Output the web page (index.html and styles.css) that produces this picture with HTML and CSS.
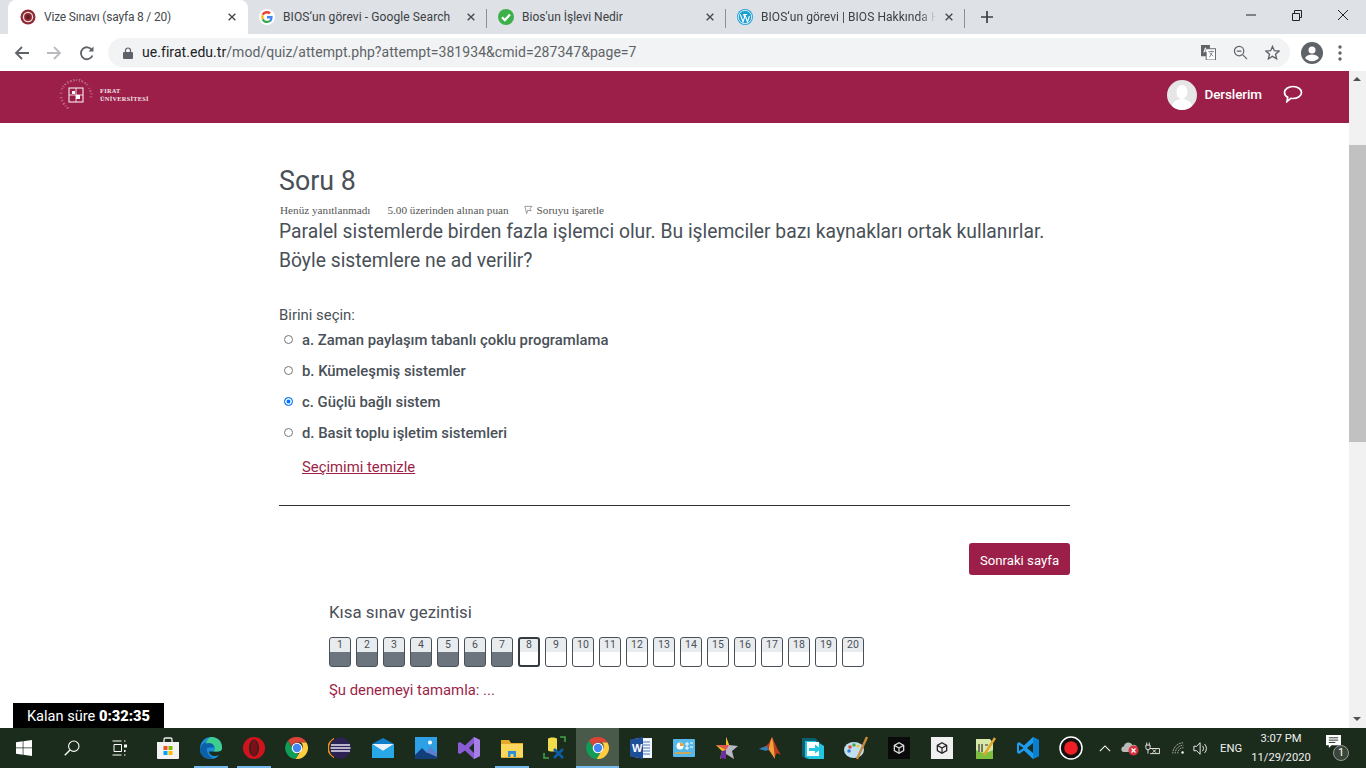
FILE: index.html
```html
<!DOCTYPE html>
<html lang="tr">
<head>
<meta charset="utf-8">
<title>Vize Sınavı (sayfa 8 / 20)</title>
<link rel="stylesheet" href="styles.css">
</head>
<body>
<svg class="defs" width="0" height="0" aria-hidden="true">
  <symbol id="chrome" viewBox="0 0 24 24">
    <path d="M12 1a11 11 0 0 1 9.500 5.500H12a5.500 5.500 0 0 0-5.300 4L3 4.600A11 11 0 0 1 12 1z" fill="#db4437"/>
    <path d="M3 4.600l4.700 8.200a5.500 5.500 0 0 0 6.200 4.800L10.700 22.900A11 11 0 0 1 3 4.600z" fill="#0f9d58"/>
    <path d="M21.500 6.500A11 11 0 0 1 10.700 22.900l4.900-7.900A5.500 5.500 0 0 0 16 6.500z" fill="#ffcd40"/>
    <circle cx="12" cy="12" r="5.300" fill="#fff"/><circle cx="12" cy="12" r="4.200" fill="#4285f4"/>
  </symbol>
  <symbol id="unity" viewBox="0 0 24 24">
    <path d="M12 3l8 4.500v9L12 21l-8-4.500v-9z" fill="none" stroke="currentColor" stroke-width="2.200"/>
    <path d="M12 12L4 7.500M12 12l8-4.500M12 12v9" stroke="currentColor" stroke-width="2"/>
  </symbol>
  <symbol id="x" viewBox="0 0 12 12"><path d="M2 2l8 8M10 2l-8 8" stroke="currentColor" stroke-width="1.600" fill="none"/></symbol>
</svg>

<div class="tabstrip">
  <div class="tab active">
    <svg class="fav" viewBox="0 0 16 16"><circle cx="8" cy="8" r="7.500" fill="#8f2a35"/><circle cx="8" cy="8" r="4.600" fill="none" stroke="#f1dcdc" stroke-width="1.300"/><circle cx="8" cy="8" r="2" fill="#5e1820"/></svg>
    <span class="tab-title tight">Vize Sınavı (sayfa 8 / 20)</span>
    <svg class="tab-x"><use href="#x"/></svg>
  </div>
  <div class="tab second">
    <svg class="fav" viewBox="0 0 16 16"><circle cx="8" cy="8" r="8" fill="#fff"/><path d="M13.600 8.200c0-.5 0-.9-.1-1.300H8v2.500h3.200c-.1.800-.6 1.400-1.200 1.800l1.900 1.500c1.100-1 1.700-2.600 1.700-4.500z" fill="#4285f4"/><path d="M8 14c1.600 0 2.900-.5 3.900-1.400L10 11.200c-.5.400-1.200.6-2 .6-1.500 0-2.800-1-3.300-2.400L2.800 10.900C3.800 12.800 5.700 14 8 14z" fill="#34a853"/><path d="M4.700 9.400a3.700 3.700 0 0 1 0-2.400L2.800 5.500a6 6 0 0 0 0 5.400z" fill="#fbbc05"/><path d="M8 4.400c.9 0 1.600.3 2.200.9l1.700-1.700C10.900 2.600 9.600 2 8 2 5.700 2 3.800 3.200 2.800 5.100L4.700 6.600C5.200 5.300 6.500 4.400 8 4.400z" fill="#ea4335"/></svg>
    <span class="tab-title wide">BIOS‘un görevi - Google Search</span>
    <svg class="tab-x"><use href="#x"/></svg>
  </div>
  <div class="tab">
    <svg class="fav" viewBox="0 0 16 16"><circle cx="8" cy="8" r="8" fill="#3eb049"/><path d="M4 8.300l2.800 2.800L12 5.600" fill="none" stroke="#fff" stroke-width="2.200"/></svg>
    <span class="tab-title">Bios'un İşlevi Nedir</span>
    <svg class="tab-x"><use href="#x"/></svg>
  </div>
  <div class="tab">
    <svg class="fav" viewBox="0 0 16 16"><circle cx="8" cy="8" r="8" fill="#1ea0d5"/><circle cx="8" cy="8" r="6.700" fill="none" stroke="#fff" stroke-width=".8"/><path d="M3.300 5.500L6 12.800l1.600-4.700-1-2.600M6.300 5.500h3.800M7.800 5.500l2.600 7.300 2.100-5.800" fill="none" stroke="#fff" stroke-width="1.100"/></svg>
    <span class="tab-title fade">BIOS‘un görevi | BIOS Hakkında H</span>
    <svg class="tab-x"><use href="#x"/></svg>
  </div>
  <svg class="newtab" viewBox="0 0 12 12"><path d="M6 0v12M0 6h12" stroke="#3c4043" stroke-width="1.700" fill="none"/></svg>
  <div class="winctl">
    <svg class="wc" viewBox="0 0 46 30"><path d="M18 15h10" stroke="#222" stroke-width="1"/></svg>
    <svg class="wc" viewBox="0 0 46 30"><path d="M18.500 13.500h7v7h-7zM20.500 13v-2.500h7v7H26" fill="none" stroke="#222" stroke-width="1"/></svg>
    <svg class="wc" viewBox="0 0 46 30"><path d="M18 10l10 10M28 10L18 20" stroke="#222" stroke-width="1"/></svg>
  </div>
</div>

<div class="toolbar">
  <svg class="navbtn" viewBox="0 0 16 16"><path d="M15 8H2.500M8 2L2 8l6 6" fill="none" stroke="#5f6368" stroke-width="1.800"/></svg>
  <svg class="navbtn" viewBox="0 0 16 16"><path d="M1 8h12.500M8 2l6 6-6 6" fill="none" stroke="#b9bbbe" stroke-width="1.800"/></svg>
  <svg class="navbtn" viewBox="0 0 16 16"><path d="M13.500 10.500A6 6 0 1 1 13 5" fill="none" stroke="#5f6368" stroke-width="1.800"/><path d="M14.500 1.500v5h-5z" fill="#5f6368"/></svg>
  <div class="omnibox">
    <svg class="lock" viewBox="0 0 10 12"><path d="M2.500 5V3.500a2.500 2.500 0 0 1 5 0V5" fill="none" stroke="#5f6368" stroke-width="1.200"/><rect y="5" width="10" height="7" rx="1" fill="#5f6368"/></svg>
    <div class="url"><span class="host">ue.firat.edu.tr</span>/mod/quiz/attempt.php?attempt=381934&amp;cmid=287347&amp;page=7</div>
    <svg class="omni-i" viewBox="0 0 16 16"><rect width="9.500" height="12" fill="#5f6368"/><rect x="5.500" y="4" width="10" height="12" fill="#fff" stroke="#5f6368"/><path d="M8 7h6M11 6v1M9 13l3-5M9 8l4 4" stroke="#5f6368" stroke-width=".8"/><path d="M3 8l1.700-5L6.500 8M3.500 6.500h2.500" fill="none" stroke="#fff"/></svg>
    <svg class="omni-i" viewBox="0 0 16 16"><circle cx="6.500" cy="6.500" r="5" fill="none" stroke="#5f6368" stroke-width="1.300"/><path d="M10.500 10.500L15 15M4 6.500h5" stroke="#5f6368" stroke-width="1.300"/></svg>
    <svg class="omni-i" viewBox="0 0 16 16"><path d="M8 1.500l2 4.600 5 .4-3.800 3.300 1.200 4.900L8 12.100l-4.400 2.600 1.200-4.900L1 6.500l5-.4z" fill="none" stroke="#5f6368" stroke-width="1.400"/></svg>
  </div>
  <svg class="profile" viewBox="0 0 22 22"><circle cx="11" cy="11" r="11" fill="#5f6368"/><circle cx="11" cy="8" r="3.500" fill="#fff"/><path d="M4 16c1.500-2.800 4.500-3.500 7-3.500s5.500.7 7 3.500c-1.600 2-4.200 3.200-7 3.200S5.600 18 4 16z" fill="#fff"/></svg>
  <svg class="dots" viewBox="0 0 4 16"><circle cx="2" cy="2" r="1.700" fill="#5f6368"/><circle cx="2" cy="8" r="1.700" fill="#5f6368"/><circle cx="2" cy="14" r="1.700" fill="#5f6368"/></svg>
</div>

<div class="viewport">
  <div class="page">
    <header class="sitebar">
      <div class="brand">
        <svg class="seal" viewBox="0 0 34 34">
          <defs><path id="sealarc" d="M3 17a14 14 0 1 1 28 0a14 14 0 1 1-28 0"/></defs>
          <text class="seal-text" transform="rotate(-60 17 17)"><textPath href="#sealarc">FIRAT ÜNİVERSİTESİ  1975</textPath></text>
          <rect x="10" y="10" width="14" height="14" fill="none" stroke="#fff" stroke-width="1"/>
          <path d="M17 10v14M10 17h14" stroke="#fff" stroke-width=".8"/>
          <rect x="17" y="17" width="4" height="4" fill="#fff"/><rect x="13" y="13" width="3" height="3" fill="#fff"/>
        </svg>
        <div class="brand-name"><span>FIRAT</span><span>ÜNİVERSİTESİ</span></div>
      </div>
      <div class="usermenu">
        <svg class="avatar" viewBox="0 0 30 30"><circle cx="15" cy="15" r="15" fill="#e6e6e6"/><ellipse cx="15" cy="12" rx="5.500" ry="7" fill="#fff"/><path d="M5 26c1-5 6-7 10-7s9 2 10 7c-2.500 2.500-6 4-10 4s-7.500-1.500-10-4z" fill="#fff"/></svg>
        <span class="courses">Derslerim</span>
        <svg class="chat" viewBox="0 0 20 18"><path d="M10 1.500c4.700 0 8.500 2.700 8.500 6s-3.800 6-8.500 6c-.8 0-1.500-.1-2.200-.2L4 16.500l.7-4.200C2.700 11.200 1.500 9.500 1.500 7.500c0-3.300 3.800-6 8.500-6z" fill="none" stroke="#fff" stroke-width="1.700"/></svg>
      </div>
    </header>

    <main class="quiz">
      <h2 class="q-title">Soru 8</h2>
      <div class="q-meta">
        <span>Henüz yanıtlanmadı</span>
        <span>5.00 üzerinden alınan puan</span>
        <span class="flag"><svg class="flag-i" viewBox="0 0 10 10"><path d="M1 1.500h8L6.500 4 8 6.500 4 6l-1 3.500z" fill="none" stroke="#777" stroke-width=".8"/></svg>Soruyu işaretle</span>
      </div>
      <p class="q-text">Paralel sistemlerde birden fazla işlemci olur. Bu işlemciler bazı kaynakları ortak kullanırlar. Böyle sistemlere ne ad verilir?</p>
      <div class="prompt">Birini seçin:</div>
      <div class="answers">
        <div class="answer"><span class="radio"></span>a. Zaman paylaşım tabanlı çoklu programlama</div>
        <div class="answer"><span class="radio"></span>b. Kümeleşmiş sistemler</div>
        <div class="answer"><span class="radio on"></span>c. Güçlü bağlı sistem</div>
        <div class="answer"><span class="radio"></span>d. Basit toplu işletim sistemleri</div>
      </div>
      <a class="clear">Seçimimi temizle</a>
      <hr class="rule">
      <div class="next-row"><span class="next">Sonraki sayfa</span></div>
      <section class="qnav">
        <h3 class="qnav-title">Kısa sınav gezintisi</h3>
        <div class="cells">
          <span class="cell done">1</span><span class="cell done">2</span><span class="cell done">3</span><span class="cell done">4</span><span class="cell done">5</span><span class="cell done">6</span><span class="cell done">7</span><span class="cell current">8</span><span class="cell">9</span><span class="cell">10</span><span class="cell">11</span><span class="cell">12</span><span class="cell">13</span><span class="cell">14</span><span class="cell">15</span><span class="cell">16</span><span class="cell">17</span><span class="cell">18</span><span class="cell">19</span><span class="cell">20</span>
        </div>
        <a class="finish">Şu denemeyi tamamla: ...</a>
      </section>
    </main>
    <div class="timer"><span>Kalan süre </span><b>0:32:35</b></div>
  </div>
  <div class="scrollbar">
    <span class="sb-up"></span>
    <div class="sb-track"><div class="sb-thumb"></div></div>
    <span class="sb-down"></span>
  </div>
</div>

<footer class="taskbar">
  <div class="tb-sys"><svg class="i16" viewBox="0 0 16 16"><path d="M0 2.300l6.700-1V7.600H0zM7.400 1.200L16 0v7.600H7.400zM0 8.300h6.700v6.400L0 13.700zM7.400 8.300H16V16l-8.600-1.200z" fill="#fff"/></svg></div>
  <div class="tb-sys"><svg class="i16" viewBox="0 0 16 16"><circle cx="9.800" cy="6.200" r="5.200" fill="none" stroke="#fff" stroke-width="1.100"/><path d="M6 10L.8 15.200" stroke="#fff" stroke-width="1.300"/></svg></div>
  <div class="tb-sys tview"><svg class="i16" viewBox="0 0 16 16"><path d="M.5 1h9M.5 15h9M2 4.500h7.500v7H2zM12 1h1.500M12 15h1.500" fill="none" stroke="#fff"/><rect x="12" y="4.500" width="3" height="3" fill="#fff"/><rect x="12" y="10" width="1.500" height="2" fill="#fff"/></svg></div>

  <div class="app"><svg class="ic" viewBox="0 0 24 24"><path d="M8 6V3.500a1.500 1.500 0 0 1 1.500-1.500h5A1.500 1.500 0 0 1 16 3.500V6" fill="none" stroke="#eee" stroke-width="1.300"/><path d="M1 6h22v16a1 1 0 0 1-1 1H2a1 1 0 0 1-1-1z" fill="#f3f3f3"/><rect x="7.500" y="10" width="4" height="4" fill="#f25022"/><rect x="12.500" y="10" width="4" height="4" fill="#7fba00"/><rect x="7.500" y="15" width="4" height="4" fill="#00a4ef"/><rect x="12.500" y="15" width="4" height="4" fill="#ffb900"/></svg></div>
  <div class="app open"><svg class="ic" viewBox="0 0 24 24"><path d="M1 13C1 5.500 6 1 12.500 1 19 1 23.500 6 23 12.500c0 2-2 3-4.500 3H10c.2 3 3.500 5 6.500 4.500 1.500-.2 3-.8 3.800-1.300C18.500 21.500 15.500 23 12 23 5.500 23 1 19 1 13z" fill="#1d8dd6"/><path d="M1 13C2 8 6 5.500 10 6c3.500.5 5.500 3 5 5.500h-5c-2 0-2.500 1.500-2 3.500.8 3 3 6 6 7.500C6.500 24 .5 19.500 1 13z" fill="#0c5fa8"/><path d="M12.500 1C19 1 23.500 6 23 12.500c0 2-2 3-4.500 3h-4c1.500-1 2-3 1-5C14.500 8 11 6 7 7.500 8 4 10 1 12.500 1z" fill="#3ecf8e"/></svg></div>
  <div class="app open"><svg class="ic" viewBox="0 0 24 24"><circle cx="12" cy="12" r="11" fill="#d3121f"/><ellipse cx="12" cy="12" rx="5" ry="8.500" fill="#1c2c1c"/><ellipse cx="12" cy="12" rx="3.500" ry="8" fill="#7c0f18"/></svg></div>
  <div class="app"><svg class="ic"><use href="#chrome"/></svg></div>
  <div class="app"><svg class="ic" viewBox="0 0 24 24"><circle cx="12.500" cy="12" r="10.500" fill="#2c2255"/><path d="M6 2.500a10.500 10.500 0 0 0 0 19A11 11 0 0 1 6 2.500z" fill="#f7941e" stroke="#f7941e"/><path d="M3 9h19M2.500 12h20M3 15h19" stroke="#e8e4f3" stroke-width="1.300"/></svg></div>
  <div class="app"><svg class="ic" viewBox="0 0 24 24"><path d="M1 8l11-6 11 6v14H1z" fill="#0f7fcb"/><path d="M1 8h22L12 15z" fill="#eaf3fa"/><path d="M1 8v14h22V8L12 15z" fill="#29a8e8"/></svg></div>
  <div class="app"><svg class="ic" viewBox="0 0 24 24"><rect x="1" y="1" width="22" height="22" fill="#2ea1e6"/><path d="M1 19l7-7 5 5 3-2 7 5v3H1z" fill="#123f7a"/><path d="M12 16l4-5 7 6v4z" fill="#5b7fd1"/><circle cx="16" cy="6.500" r="2" fill="#fff"/></svg></div>
  <div class="app"><svg class="ic" viewBox="0 0 24 24"><path d="M17 1l6 3v16l-6 3-9-8.500L3 18l-2-1V7l2-1 5 3.500zM17 7l-5 5 5 5z" fill="#8a5cd6" fill-rule="evenodd"/><path d="M17 1l6 3v16l-6 3z" fill="#a67ee8"/></svg></div>
  <div class="app open"><svg class="ic" viewBox="0 0 24 24"><path d="M1 4h8l2 3h12v15H1z" fill="#e2a92b"/><path d="M1 8h22v13H1z" fill="#fbd75b"/><path d="M8 15h8v6h-2.500v-3h-3v3H8z" fill="#2b8fd8"/></svg></div>
  <div class="app"><svg class="ic" viewBox="0 0 24 24"><path d="M5 3c0-2 9-2 9 0v11c0 2-9 2-9 0z" fill="#f2dc4b"/><path d="M1 17v5h5M17 1h5v5" fill="none" stroke="#3fa14a" stroke-width="1.600"/><path d="M11 22l9-9M11 13l9 9" stroke="#0b5ea8" stroke-width="2.600"/></svg></div>
  <div class="app open current"><svg class="ic"><use href="#chrome"/></svg></div>
  <div class="app"><svg class="ic" viewBox="0 0 24 24"><path d="M7 2h16v20H7z" fill="#f3f6fb"/><path d="M13 6h8M13 9h8M13 12h8M13 15h8M13 18h8" stroke="#4a79bd"/><path d="M1 3.500L14 1v22L1 20.500z" fill="#1e4f99"/><text class="word-w" x="3" y="16">W</text></svg></div>
  <div class="app"><svg class="ic" viewBox="0 0 24 24"><rect x="1" y="3" width="22" height="18" rx="1" fill="#56b8e8"/><circle cx="8" cy="10" r="3.500" fill="#fff"/><path d="M8 10V6.500A3.500 3.500 0 0 1 11.500 10z" fill="#f1a22d"/><path d="M14 7h2v2h-2zM14 11h2v2h-2zM18 7h3M18 11h3" stroke="#fff" fill="none"/><path d="M3 17h16" stroke="#f1a22d" stroke-width="1.500"/></svg></div>
  <div class="app"><svg class="ic" viewBox="0 0 24 24"><path d="M11 1l3 8 9 1-6 5 2 8-8-5z" fill="#b8b8c4"/><path d="M11 1l3 8H1l6 6-2 8 6-5z" fill="#f5c518"/><path d="M1 9h13l-3 5z" fill="#e2574c"/><path d="M7 15l4-1 0 9-6-1z" fill="#6a2fa0"/></svg></div>
  <div class="app"><svg class="ic" viewBox="0 0 24 24"><path d="M1 13l7-3 3-3 3-6c3 6 6 14 9 18l-4-2-3 5c-2-5-3-8-7-8-2-.5-5-1-8-1z" fill="#bf3a1e"/><path d="M14 1c-2 5-3 9-3 13l6 9c-1-7-1-15-3-22z" fill="#f2a13a"/><path d="M1 13l7-3 3 3-3 2z" fill="#2f7fb8"/></svg></div>
  <div class="app"><svg class="ic" viewBox="0 0 24 24"><path d="M1 2h13l9 8v13H5l-4-3z" fill="#0b5f6f"/><path d="M4 5h10l9 5v13H8l-4-2z" fill="#23c6e0"/><path d="M6 6h12v14H6z" fill="#fff"/><path d="M8 12h6V8.500l6 4.500-6 4.500V15H8z" fill="#23c6e0"/></svg></div>
  <div class="app"><svg class="ic" viewBox="0 0 24 24"><ellipse cx="10" cy="14" rx="10" ry="8" fill="#bfe0f0"/><circle cx="6" cy="11" r="1.800" fill="#e24a3b"/><circle cx="10" cy="9" r="1.800" fill="#4ca84a"/><circle cx="5" cy="15" r="1.800" fill="#3a7bd5"/><circle cx="14" cy="10" r="1.500" fill="#f1c232"/><path d="M13 23L23 1" stroke="#c98a3a" stroke-width="2.400"/></svg></div>
  <div class="app"><svg class="tile" viewBox="0 0 22 22"><rect width="22" height="22" fill="#0a0a0a"/><svg x="4" y="4" width="14" height="14" class="uni-w"><use href="#unity"/></svg></svg></div>
  <div class="app"><svg class="tile" viewBox="0 0 22 22"><rect width="22" height="22" fill="#f0f0f0"/><svg x="4" y="4" width="14" height="14" class="uni-d"><use href="#unity"/></svg></svg></div>
  <div class="app"><svg class="ic" viewBox="0 0 24 24"><path d="M3 3h14l3 4v16H3z" fill="#d8e8a8"/><path d="M3 14c5 4 12 3 17 0v9H3z" fill="#7fbf3f"/><path d="M6 8v8M9 8v8M12 9h3" stroke="#333" stroke-width="1.200"/><path d="M11 19L22 2" stroke="#e2a72b" stroke-width="2.400"/></svg></div>
  <div class="app"><svg class="ic" viewBox="0 0 24 24"><path d="M17 1l6 3v16l-6 3-9-8.500L3 18l-2-1.500v-9L3 6l5 3.500z" fill="#1f9cf0"/><path d="M17 1v22l6-3V4z" fill="#0a7fd0"/><path d="M3 9l4.500 3L3 15zM17 7l-6 5 6 5z" fill="#1c2c1c"/></svg></div>
  <div class="app"><svg class="ic" viewBox="0 0 24 24"><circle cx="12" cy="12" r="11" fill="#111" stroke="#fff" stroke-width="1.500"/><circle cx="12" cy="12" r="6.800" fill="#f01f26"/></svg></div>

  <div class="tray">
    <svg class="chev" viewBox="0 0 14 8"><path d="M1 7l6-6 6 6" fill="none" stroke="#fff" stroke-width="1.200"/></svg>
    <svg class="cloud" viewBox="0 0 20 16"><path d="M3 12a3 3 0 0 1 1-5.700A4.500 4.500 0 0 1 12.500 5 3.500 3.500 0 0 1 15 12z" fill="#b8bcb8"/><circle cx="13.500" cy="10.500" r="5" fill="#d8343f"/><path d="M11.500 8.500l4 4M15.500 8.500l-4 4" stroke="#fff" stroke-width="1.300"/></svg>
    <svg class="batt" viewBox="0 0 20 16"><path d="M6 8h11v6H6" fill="none" stroke="#fff"/><path d="M2 1v3M5 1v3M1 4h5v3a2.500 2.500 0 0 1-5 0zM3.500 9v5" fill="none" stroke="#fff"/><path d="M9 9l4 4M13 9l-4 4" stroke="#fff"/></svg>
    <svg class="wifi" viewBox="0 0 16 16"><path d="M1 14A13 13 0 0 1 14 1M4 14A10 10 0 0 1 14 4M7 14a7 7 0 0 1 7-7" fill="none" stroke="#cfd3cf" stroke-width="1" stroke-dasharray="2 1"/><circle cx="13" cy="13" r="1.500" fill="#fff"/></svg>
    <svg class="vol" viewBox="0 0 18 16"><path d="M1 5.500h3l4-4v13l-4-4H1z" fill="none" stroke="#fff"/><path d="M10.500 5a4 4 0 0 1 0 6M13 3a7 7 0 0 1 0 10" fill="none" stroke="#fff"/></svg>
    <span class="lang">ENG</span>
    <div class="clock"><span>3:07 PM</span><span>11/29/2020</span></div>
    <div class="notif">
      <svg class="notif-i" viewBox="0 0 16 15"><path d="M0 0h16v11H6l-3 3v-3H0z" fill="#fff"/><path d="M3 3h10M3 5.500h10M3 8h7" stroke="#1c2c1c"/></svg>
      <span class="badge">1</span>
    </div>
  </div>
</footer>
</body>
</html>
```
FILE: styles.css
```css
* { box-sizing: border-box; }
html, body { margin: 0; height: 100%; }
body { width: 1366px; height: 768px; overflow: hidden; display: flex; flex-direction: column; font-family: Roboto, "Liberation Sans", sans-serif; background: #fff; }
.defs { position: absolute; }

/* tab strip */
.tabstrip { height: 34px; flex: none; background: #dee1e6; display: flex; align-items: flex-end; padding-left: 8px; }
.tab { width: 239px; height: 34px; flex: none; display: flex; align-items: center; padding: 0 11px 0 11px; position: relative; color: #3c4043; font-size: 12px; }
.tab::after { content: ""; position: absolute; right: 0; top: 9px; height: 19px; width: 1px; background: #8c8f94; }
.tab.active { background: #fff; border-radius: 8px 8px 0 0; width: 240px; color: #45494d; padding-left: 12px; }
.tab.active::after { display: none; }
.tab.second { padding-left: 11px; }
.fav { width: 16px; height: 16px; flex: none; margin-right: 8px; }
.tab-title { flex: 1; min-width: 0; white-space: nowrap; overflow: hidden; }
.tight { letter-spacing: -.2px; }
.wide { letter-spacing: .1px; }
.fade { overflow: visible; letter-spacing: .05px; -webkit-mask-image: linear-gradient(90deg, #000 90%, transparent); mask-image: linear-gradient(90deg, #000 90%, transparent); }
.tab-x { width: 10px; height: 10px; flex: none; color: #45494d; margin-left: 8px; }
.newtab { width: 12px; height: 12px; flex: none; margin: 0 0 11px 16px; }
.winctl { margin-left: auto; align-self: flex-start; display: flex; }
.wc { width: 46px; height: 30px; }

/* toolbar */
.toolbar { height: 37px; flex: none; display: flex; align-items: center; padding: 0 0 0 14px; background: #fff; }
.navbtn { width: 16px; height: 16px; flex: none; margin-right: 16px; }
.navbtn:nth-child(2) { margin-right: 17px; }
.navbtn:nth-child(3) { margin-right: 13px; }
.omnibox { width: 1182px; height: 29px; background: #f1f3f4; border-radius: 15px; display: flex; align-items: center; padding: 0 10px 0 15px; }
.lock { width: 10px; height: 12px; flex: none; margin-right: 9px; }
.url { flex: 1; font-size: 14px; color: #5f6368; white-space: nowrap; letter-spacing: .05px; padding-bottom: 2px; }
.host { color: #202124; }
.omni-i { width: 15px; height: 15px; flex: none; margin-left: 17px; }
.profile { width: 22px; height: 22px; flex: none; margin-left: 11px; }
.dots { width: 4px; height: 16px; flex: none; margin-left: 15px; }

/* page */
.viewport { flex: 1; min-height: 0; display: flex; overflow: hidden; }
.page { flex: 1; min-width: 0; position: relative; overflow: hidden; color: #495057; }
.sitebar { height: 52px; background: #9b1f48; display: flex; align-items: center; justify-content: space-between; padding: 0 46px 4px 59px; color: #fff; }
.brand { display: flex; align-items: center; gap: 7px; }
.seal { width: 34px; height: 34px; }
.seal-text { font-family: "Liberation Serif", serif; font-size: 3.200px; fill: #f3dde4; letter-spacing: 1px; }
.brand-name { display: flex; flex-direction: column; font-family: "Liberation Serif", serif; font-weight: 700; font-size: 6.300px; line-height: 8px; letter-spacing: .3px; color: #f3e3e8; }
.usermenu { display: flex; align-items: center; }
.avatar { width: 30px; height: 30px; margin-right: 7px; }
.courses { font-size: 13.500px; font-weight: 500; margin: 0 21px 2px 0; letter-spacing: -.1px; }
.chat { width: 20px; height: 18px; margin-bottom: 2px; }

.quiz { margin: 0 0 0 279px; width: 791px; }
.q-title { margin: 39px 0 0; font-weight: 400; font-size: 26.800px; line-height: 38px; color: #495057; }
.q-meta { display: flex; gap: 17px; font-family: "Liberation Serif", serif; font-size: 11.200px; line-height: 14px; margin-top: 3px; color: #555; padding-left: 1px; }
.flag { margin-left: -2px; }
.flag-i { width: 9px; height: 9px; margin-right: 4px; }
.q-text { margin: 0; font-size: 19.300px; line-height: 29px; color: #495057; }
.prompt { margin-top: 29px; font-size: 14.900px; line-height: 22px; }
.answers { display: flex; flex-direction: column; margin-top: -2px; }
.answer { height: 31px; display: flex; align-items: center; font-size: 14.850px; font-weight: 500; color: #495057; padding-left: 5px; }
.radio { width: 9px; height: 9px; border-radius: 50%; border: 1px solid #767676; background: #fff; margin-right: 9px; flex: none; }
.radio.on { border-color: #0075ff; background: #0075ff; box-shadow: inset 0 0 0 1.500px #fff; }
.clear { display: block; margin: 8px 0 0 23px; font-size: 14.850px; line-height: 22px; color: #9b1f48; text-decoration: underline; }
.rule { margin: 27px 0 0; border: 0; border-top: 1px solid #333; }
.next-row { display: flex; justify-content: flex-end; margin-top: 37px; }
.next { width: 101px; height: 32px; background: #9b1f48; border-radius: 3px; color: #fff; font-size: 13.200px; padding-top: 2px; display: flex; align-items: center; justify-content: center; }
.qnav { margin: 26px 0 0 50px; }
.qnav-title { margin: 0; font-weight: 400; font-size: 16.850px; line-height: 22px; color: #495057; }
.cells { display: flex; gap: 5px; margin-top: 14px; }
.cell { width: 22px; height: 30px; border: 1px solid #495057; border-radius: 3px; font-size: 10.500px; line-height: 13px; text-align: center; color: #495057; background: linear-gradient(#e9ecef 14px, #fff 14px); }
.cell.done { background: linear-gradient(#e9ecef 14px, #6c757d 14px); }
.cell.current { border: 2px solid #343a40; line-height: 11px; background: linear-gradient(#e9ecef 13px, #fff 13px); }
.finish { display: block; margin-top: 12px; font-size: 14.850px; line-height: 22px; color: #9b1f48; }
.timer { position: absolute; left: 13px; bottom: 0; width: 151px; height: 25px; background: #000; color: #fff; font-size: 14.600px; display: flex; align-items: center; justify-content: center; white-space: pre; }
.timer b { font-weight: 900; }

.scrollbar { width: 17px; flex: none; background: #f1f1f1; display: flex; flex-direction: column; align-items: center; }
.sb-up, .sb-down { height: 17px; width: 17px; flex: none; position: relative; }
.sb-up::after, .sb-down::after { content: ""; position: absolute; left: 4px; top: 6px; border: 4px solid transparent; border-top: 0; border-bottom: 4px solid #505050; }
.sb-down::after { border-bottom: 0; border-top: 4px solid #505050; }
.sb-track { flex: 1; width: 100%; padding-top: 57px; }
.sb-thumb { height: 297px; background: #c1c1c1; }

/* taskbar */
.taskbar { height: 40px; flex: none; background: #1c2c1c; display: flex; align-items: stretch; color: #fff; }
.tb-sys { width: 48px; flex: none; display: flex; align-items: center; justify-content: center; }
.tview { margin-right: 2px; }
.i16 { width: 16px; height: 16px; }
.app { width: 43px; display: flex; align-items: center; justify-content: center; flex: none; position: relative; }
.app.open::after { content: ""; position: absolute; left: 5px; right: 4px; bottom: 0; height: 2px; background: #76b9ed; }
.app.current { background: #4a5a4a; }
.app.current::after { left: 0; right: 0; }
.ic { width: 24px; height: 24px; display: block; }
.tile { width: 22px; height: 22px; display: block; }
.word-w { font-family: "Liberation Sans", sans-serif; font-weight: 700; font-size: 11px; fill: #fff; }
.uni-w { color: #ddd; } .uni-d { color: #222; }
.tray { flex: 1; min-width: 0; display: flex; align-items: center; padding-left: 7px; }
.chev { width: 12px; height: 7px; flex: none; margin-right: 9px; }
.cloud { width: 20px; height: 16px; flex: none; margin-right: 5px; }
.batt { width: 17px; height: 15px; flex: none; margin-right: 10px; }
.wifi { width: 13px; height: 13px; flex: none; margin-right: 8px; }
.vol { width: 16px; height: 15px; flex: none; margin-right: 11px; }
.lang { font-size: 11.300px; margin-right: 7px; color: #f0f0f0; flex: none; width: 24px; }
.clock { display: flex; flex-direction: column; align-items: center; font-size: 11.200px; line-height: 19px; width: 60px; flex: none; color: #f0f0f0; }
.notif { margin-left: 14px; position: relative; width: 24px; height: 26px; flex: none; }
.notif-i { width: 17px; height: 14px; position: absolute; left: 0; top: 0; }
.badge { position: absolute; right: 0; bottom: 0; width: 16px; height: 16px; border-radius: 50%; background: #3a463a; border: 1px solid #999; font-size: 11px; line-height: 14px; text-align: center; color: #fff; }
```
